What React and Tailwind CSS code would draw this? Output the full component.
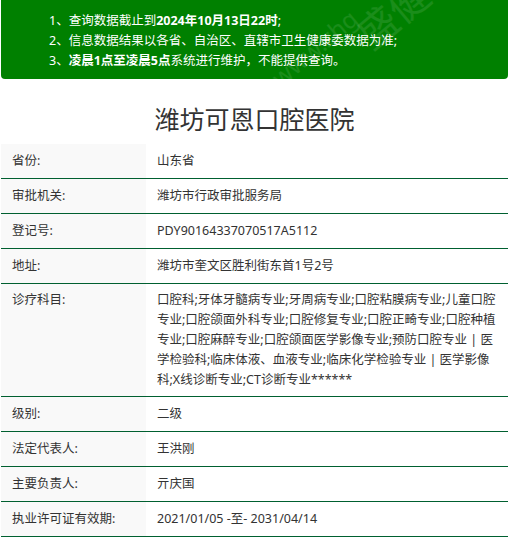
import React from "react";

const ROWS = [
  { label: "省份:", value: "山东省" },
  { label: "审批机关:", value: "潍坊市行政审批服务局" },
  { label: "登记号:", value: "PDY90164337070517A5112" },
  { label: "地址:", value: "潍坊市奎文区胜利街东首1号2号" },
  {
    label: "诊疗科目:",
    value:
      "口腔科;牙体牙髓病专业;牙周病专业;口腔粘膜病专业;儿童口腔专业;口腔颌面外科专业;口腔修复专业;口腔正畸专业;口腔种植专业;口腔麻醉专业;口腔颌面医学影像专业;预防口腔专业 | 医学检验科;临床体液、血液专业;临床化学检验专业 | 医学影像科;X线诊断专业;CT诊断专业******",
    multi: true,
  },
  { label: "级别:", value: "二级" },
  { label: "法定代表人:", value: "王洪刚" },
  { label: "主要负责人:", value: "亓庆国" },
  { label: "执业许可证有效期:", value: "2021/01/05 -至- 2031/04/14" },
];

function Notice() {
  return (
    <div className="relative overflow-hidden bg-[#008000] rounded-b-[4px] pt-[11px] pb-[8px] pl-[48px] text-white text-[12.5px] leading-[20px]">
      {/* watermark */}
      <span className="pointer-events-none absolute left-[352px] top-[-6px] -rotate-[40deg] text-[40px] leading-none text-white/10">
        盛健
      </span>
      <span className="pointer-events-none absolute left-[262px] top-[36px] -rotate-[40deg] text-[24px] leading-none text-white/10">
        www.zhg
      </span>
      <p className="relative">
        1、查询数据截止到<b>2024年10月13日22时</b>;
      </p>
      <p className="relative">2、信息数据结果以各省、自治区、直辖市卫生健康委数据为准;</p>
      <p className="relative">
        3、<b>凌晨1点至凌晨5点</b>系统进行维护，不能提供查询。
      </p>
    </div>
  );
}

export default function App() {
  return (
    <div
      className="bg-white min-h-[541px] text-[#333]"
      style={{ fontFamily: '"Noto Sans", "Noto Sans CJK SC", sans-serif' }}
    >
      <div className="ml-[1px] w-[507px]">
        <Notice />
        <h1 className="text-center text-[25px] leading-[35px] pt-[23px] pb-[7px] text-[#333]">
          潍坊可恩口腔医院
        </h1>
        <div className="text-[12.5px]">
          {ROWS.map((r) => (
            <div key={r.label} className="flex border-b border-[#006030]">
              <div
                className={`w-[145px] shrink-0 bg-[#f9f9f9] pl-[11px] leading-[20px] ${
                  r.multi ? "py-[6px]" : "py-[7px]"
                }`}
              >
                {r.label}
              </div>
              <div
                className={`flex-1 pl-[11px] pr-[10px] leading-[20px] ${
                  r.multi ? "py-[6px]" : "py-[7px]"
                }`}
              >
                {r.value}
              </div>
            </div>
          ))}
        </div>
      </div>
    </div>
  );
}
